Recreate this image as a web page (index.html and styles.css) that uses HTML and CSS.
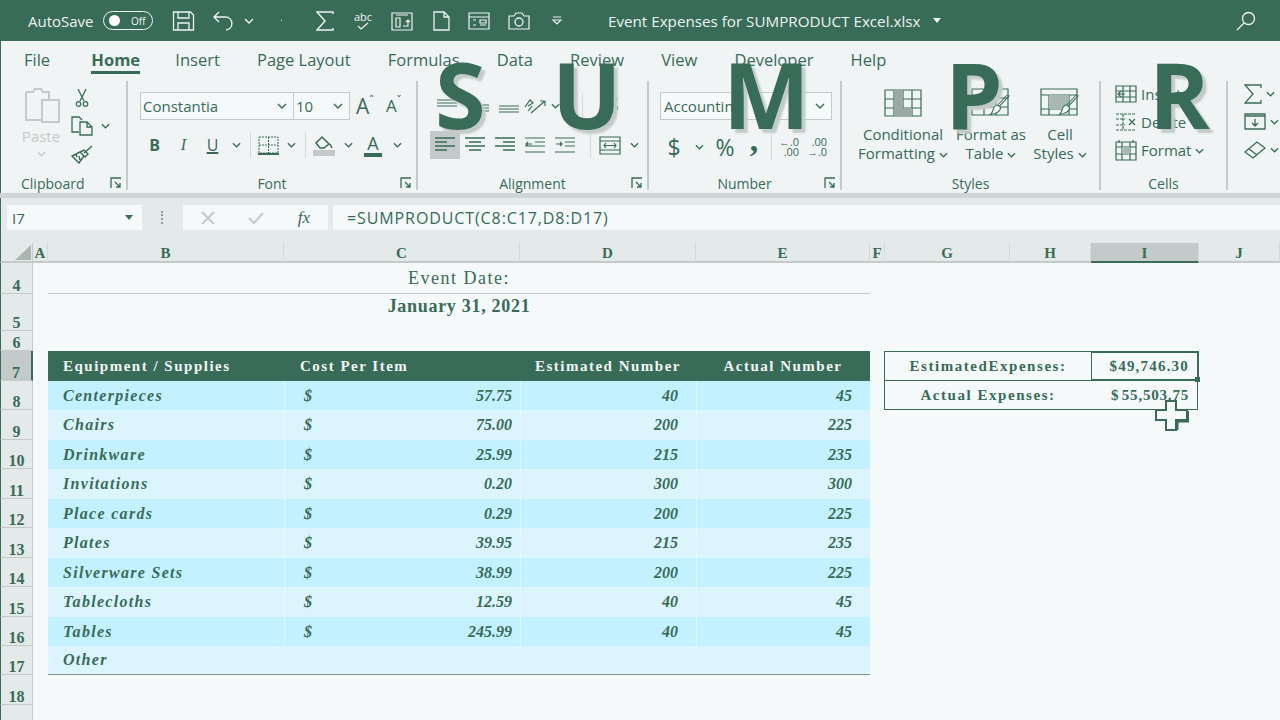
FILE: index.html
```html
<!DOCTYPE html>
<html lang="en">
<head>
    <meta charset="UTF-8">
    <title>Event Expenses for SUMPRODUCT Excel.xlsx</title>
    <link rel="stylesheet" href="styles.css">
</head>
<body>
<svg class="defs" width="0" height="0">
    <symbol id="chev" viewBox="0 0 10 6"><path d="M1 1l4 4 4-4" fill="none" stroke="currentColor" stroke-width="1.4"/></symbol>
    <symbol id="launch" viewBox="0 0 12 12"><path d="M1 11V1h10M5 5l5 5M10 6v4H6" fill="none" stroke="currentColor" stroke-width="1.3"/></symbol>
    <symbol id="brush" viewBox="0 0 30 30"><path d="M28 2L14 17M25 1L12 15M12 15l4 4c-1 5-6 8-14 9 4-3 3-7 5-10 1-2 3-3 5-3z" fill="#f5f9fa" stroke="currentColor" stroke-width="1.4"/></symbol>
</svg>
<div class="app">

    <!-- title bar -->
    <header class="titlebar">
        <span class="autosave">AutoSave</span>
        <span class="toggle"><i></i><b>Off</b></span>
        <svg width="23" height="20" viewBox="0 0 23 20"><path d="M1.500 1h17l3 3v15h-20zM6 1v6h11V1M6 19v-7h11v7" fill="none" stroke="currentColor" stroke-width="1.3"/></svg>
        <svg width="22" height="20" viewBox="0 0 22 20"><path d="M7 1L2 6l5 5M2 6h11c9 0 9 12 1 13" fill="none" stroke="currentColor" stroke-width="1.4"/></svg>
        <svg class="tiny" width="10" height="6"><use href="#chev"/></svg>
        <span class="dot"></span>
        <svg width="18" height="20" viewBox="0 0 18 20"><path d="M17 3V1H1l8 9-8 9h16v-2" fill="none" stroke="currentColor" stroke-width="1.4"/></svg>
        <span class="abc">abc<svg width="12" height="8" viewBox="0 0 12 8"><path d="M1 4l3 3 7-6" fill="none" stroke="currentColor" stroke-width="1.2"/></svg></span>
        <svg width="22" height="20" viewBox="0 0 22 20"><path d="M1 2h20v17H1zM5 7h4v9H5zM12 15h5V9M15 11l2-2 2 2M5 4h12" fill="none" stroke="currentColor" stroke-width="1.2"/></svg>
        <svg width="17" height="20" viewBox="0 0 17 20"><path d="M1 1h10l5 5v13H1zM11 1v5h5" fill="none" stroke="currentColor" stroke-width="1.3"/></svg>
        <svg width="22" height="18" viewBox="0 0 22 18"><path d="M1 1h20v16H1zM1 5h20M5 8h3M5 13h3M12 8h6v3h-6zM12 13h6" fill="none" stroke="currentColor" stroke-width="1.2"/></svg>
        <svg width="22" height="18" viewBox="0 0 22 18"><path d="M1 4h5l2-3h6l2 3h5v13H1z" fill="none" stroke="currentColor" stroke-width="1.2"/><circle cx="11" cy="10" r="4" fill="none" stroke="currentColor" stroke-width="1.3"/></svg>
        <svg class="qat-more" width="10" height="9" viewBox="0 0 10 9"><path d="M1 1h8M1 4l4 4 4-4z" fill="none" stroke="currentColor" stroke-width="1.2"/></svg>
        <span class="doc-title">Event Expenses for SUMPRODUCT Excel.xlsx</span>
        <span class="caret"></span>
        <svg class="search" width="20" height="20" viewBox="0 0 20 20"><circle cx="12.500" cy="7.500" r="6" fill="none" stroke="currentColor" stroke-width="1.3"/><path d="M8 12l-7 7" stroke="currentColor" stroke-width="1.3"/></svg>
    </header>

    <!-- ribbon -->
    <nav class="tabs">
        <span>File</span>
        <span class="active">Home</span>
        <span>Insert</span>
        <span>Page Layout</span>
        <span>Formulas</span>
        <span>Data</span>
        <span>Review</span>
        <span>View</span>
        <span>Developer</span>
        <span>Help</span>
    </nav>

    <section class="ribbon">
        <div class="group clipboard">
            <div class="group-body">
                <div class="paste">
                    <svg width="38" height="37" viewBox="0 0 38 37"><path d="M4 5h7l2-3h6l2 3h6v8M4 5v28h16M20 13h17v22H20z" fill="none" stroke="#c4cac9" stroke-width="2"/></svg>
                    <span>Paste</span>
                    <svg width="9" height="6"><use href="#chev"/></svg>
                </div>
                <div class="clip-tools">
                    <svg width="14" height="19" viewBox="0 0 14 19"><path d="M3 1l6 12M11 1L5 13" fill="none" stroke="currentColor" stroke-width="1.3"/><circle cx="3.500" cy="16" r="2.300" fill="none" stroke="currentColor" stroke-width="1.2"/><circle cx="10.500" cy="16" r="2.300" fill="none" stroke="currentColor" stroke-width="1.2"/></svg>
                    <span class="copy-row">
                        <svg width="23" height="20" viewBox="0 0 23 20"><path d="M8 16H1V1h7l3 3M9 6h7l5 5v8H9zM16 6v5h5" fill="none" stroke="currentColor" stroke-width="1.3"/></svg>
                        <svg class="tiny" width="9" height="6"><use href="#chev"/></svg>
                    </span>
                    <svg width="22" height="19" viewBox="0 0 22 19"><path d="M21 1l-8 7M13 5l4 4-3 3-5-5zM9 7l-8 4 7 7 5-7M5 9l1 3M8 11l1 4" fill="none" stroke="currentColor" stroke-width="1.4"/></svg>
                </div>
            </div>
            <div class="group-label"><span>Clipboard</span><svg width="12" height="12"><use href="#launch"/></svg></div>
        </div>

        <div class="group font">
            <div class="group-body stack">
                <div class="font-top">
                    <span class="combo font-name">Constantia<svg width="10" height="6"><use href="#chev"/></svg></span>
                    <span class="combo font-size">10<svg width="10" height="6"><use href="#chev"/></svg></span>
                    <span class="grow">A<sup>ˆ</sup></span>
                    <span class="shrink">A<sup>ˇ</sup></span>
                </div>
                <div class="font-tools tools">
                    <b class="glyph">B</b>
                    <i class="glyph ital">I</i>
                    <u class="glyph">U</u>
                    <svg width="9" height="6"><use href="#chev"/></svg>
                    <span class="vsep"></span>
                    <svg width="21" height="19" viewBox="0 0 21 19"><path d="M1 1h19v16H1zM10.500 1v16M1 9h19" fill="none" stroke="currentColor" stroke-width="1" stroke-dasharray="2 1"/><path d="M0 18h21" stroke="currentColor" stroke-width="2"/></svg>
                    <svg width="9" height="6"><use href="#chev"/></svg>
                    <span class="vsep"></span>
                    <svg width="22" height="21" viewBox="0 0 22 21"><path d="M3 8l6-6 7 7-5 4H7zM17 9l2 4" fill="none" stroke="currentColor" stroke-width="1.5"/><path d="M0 15h22v6H0z" fill="#c4cac9"/></svg>
                    <svg width="9" height="6"><use href="#chev"/></svg>
                    <span class="font-color">A</span>
                    <svg width="9" height="6"><use href="#chev"/></svg>
                </div>
            </div>
            <div class="group-label centered"><span>Font</span><svg width="12" height="12"><use href="#launch"/></svg></div>
        </div>

        <div class="group alignment">
            <div class="group-body stack">
                <div class="align-top tools">
                    <svg width="20" height="14" viewBox="0 0 20 14"><path d="M0 1h20M0 4h20M0 7h20" stroke="currentColor"/></svg>
                    <svg width="20" height="14" viewBox="0 0 20 14"><path d="M0 6h20M0 9h20M0 12h20" stroke="currentColor"/></svg>
                    <svg width="20" height="14" viewBox="0 0 20 14"><path d="M0 7h20M0 10h20M0 13h20" stroke="currentColor"/></svg>
                    <svg width="22" height="18" viewBox="0 0 22 18"><path d="M7 16L21 4M21 4h-5M21 4v5M1 10l5-7 3 3-5 3M4 14l4-5" fill="none" stroke="currentColor" stroke-width="1.2"/></svg>
                    <svg width="9" height="6"><use href="#chev"/></svg>
                    <span class="vsep"></span>
                    <svg width="20" height="18" viewBox="0 0 20 18"><path d="M1 2h18M1 8h14c5 0 5 6 0 6h-3M1 14h6" fill="none" stroke="currentColor"/></svg>
                </div>
                <div class="align-bottom tools">
                    <span class="pressed"><svg width="20" height="16" viewBox="0 0 20 16"><path d="M0 1h20M0 5h12M0 9h20M0 13h12" stroke="currentColor" stroke-width="1.3"/></svg></span>
                    <svg width="20" height="16" viewBox="0 0 20 16"><path d="M0 1h20M4 5h12M0 9h20M4 13h12" stroke="currentColor" stroke-width="1.3"/></svg>
                    <svg width="20" height="16" viewBox="0 0 20 16"><path d="M0 1h20M8 5h12M0 9h20M8 13h12" stroke="currentColor" stroke-width="1.3"/></svg>
                    <svg width="20" height="16" viewBox="0 0 20 16"><path d="M0 1h20M10 5h10M0 9h20M0 15h20M7 7H1M3 5L1 7l2 2" fill="none" stroke="currentColor" stroke-width="1.2"/></svg>
                    <svg width="20" height="16" viewBox="0 0 20 16"><path d="M0 1h20M10 5h10M10 9h10M0 15h20M1 7h6M5 5l2 2-2 2" fill="none" stroke="currentColor" stroke-width="1.2"/></svg>
                    <span class="vsep"></span>
                    <svg width="22" height="19" viewBox="0 0 22 19"><path d="M1 1h20v17H1zM1 5h20M1 14h20M5 9.500h12M7 7L5 9.500 7 12M15 7l2 2.500-2 2.500" fill="none" stroke="currentColor" stroke-width="1.2"/></svg>
                    <svg width="9" height="6"><use href="#chev"/></svg>
                </div>
            </div>
            <div class="group-label centered"><span>Alignment</span><svg width="12" height="12"><use href="#launch"/></svg></div>
        </div>

        <div class="group number">
            <div class="group-body stack">
                <span class="combo number-format">Accounting<svg width="10" height="6"><use href="#chev"/></svg></span>
                <div class="number-tools tools">
                    <span class="big">$</span>
                    <svg width="9" height="6"><use href="#chev"/></svg>
                    <span class="big">%</span>
                    <span class="comma">,</span>
                    <span class="vsep"></span>
                    <span class="decimals"><b>←.0</b><b>.00</b></span>
                    <span class="decimals"><b>.00</b><b>→.0</b></span>
                </div>
            </div>
            <div class="group-label centered"><span>Number</span><svg width="12" height="12"><use href="#launch"/></svg></div>
        </div>

        <div class="group styles">
            <div class="group-body styles-row">
                <div class="style-btn">
                    <svg width="38" height="30" viewBox="0 0 38 28"><path d="M1 1h36v26H1zM10 1v26M19 1v26M28 1v26M1 10h36M1 19h36" fill="none" stroke="currentColor" stroke-width="1.2"/><path d="M10 1h9v9h-9zM19 19h-9v-9h9zM10 19h18v8H10z" fill="#9aa9a4"/></svg>
                    <span>Conditional</span>
                    <span>Formatting <svg width="9" height="6"><use href="#chev"/></svg></span>
                </div>
                <div class="style-btn">
                    <svg width="40" height="30" viewBox="0 0 40 30"><path d="M1 1h36v26H1zM1 10h36M1 19h36M13 1v26M25 1v26" fill="none" stroke="currentColor" stroke-width="1.2"/><use href="#brush" x="18" y="6" width="22" height="22"/></svg>
                    <span>Format as</span>
                    <span>Table <svg width="9" height="6"><use href="#chev"/></svg></span>
                </div>
                <div class="style-btn">
                    <svg width="40" height="30" viewBox="0 0 40 30"><path d="M1 1h36v26H1zM1 7h36M1 21h36M9 7v20M29 7v20" fill="none" stroke="currentColor" stroke-width="1.2"/><path d="M9 7h20v14H9z" fill="#a9b8b3"/><use href="#brush" x="18" y="6" width="22" height="22"/></svg>
                    <span>Cell</span>
                    <span>Styles <svg width="9" height="6"><use href="#chev"/></svg></span>
                </div>
            </div>
            <div class="group-label centered"><span>Styles</span></div>
        </div>

        <div class="group cells">
            <div class="group-body cell-list">
                <div><svg width="22" height="18" viewBox="0 0 22 18"><path d="M1 1h20v16H1zM1 6h20M1 12h20M8 1v16M15 1v16" fill="none" stroke="currentColor" stroke-width="1.2"/><path d="M10 9H3M6 6L3 9l3 3" fill="none" stroke="currentColor" stroke-width="1.2"/></svg><span>Insert</span></div>
                <div><svg width="22" height="18" viewBox="0 0 22 18"><path d="M1 1h20M1 17h20M1 6h9M1 12h9M8 1v16" fill="none" stroke="currentColor" stroke-width="1.2" stroke-dasharray="3 1"/><path d="M14 6l6 6M20 6l-6 6" stroke="currentColor" stroke-width="1.2"/></svg><span>Delete</span></div>
                <div><svg width="22" height="22" viewBox="0 0 22 22"><path d="M1 3h20v18H1zM1 8h20M1 15h20M7 3v18M15 3v18M4 1v3M18 1v3" fill="none" stroke="currentColor" stroke-width="1.2"/><path d="M7 8h8v7H7z" fill="#a9b8b3"/></svg><span>Format <svg width="9" height="6"><use href="#chev"/></svg></span></div>
            </div>
            <div class="group-label centered"><span>Cells</span></div>
        </div>

        <div class="group editing">
            <div class="group-body cell-list">
                <div><svg width="18" height="20" viewBox="0 0 18 20"><path d="M17 4V1H1l8 9-8 9h16v-3" fill="none" stroke="currentColor" stroke-width="1.3"/></svg><svg class="tiny" width="9" height="6"><use href="#chev"/></svg></div>
                <div><svg width="22" height="17" viewBox="0 0 22 17"><path d="M1 1h20v15H1zM1 3h20M11 6v7M8 10l3 3 3-3" fill="none" stroke="currentColor" stroke-width="1.3"/></svg><svg class="tiny" width="9" height="6"><use href="#chev"/></svg></div>
                <div><svg width="22" height="18" viewBox="0 0 22 18"><path d="M1 11L13 1l8 6-12 10zM5 8l8 6" fill="none" stroke="currentColor" stroke-width="1.3"/></svg><svg class="tiny" width="9" height="6"><use href="#chev"/></svg></div>
            </div>
        </div>
    </section>

    <!-- formula bar -->
    <section class="formula-bar">
        <div class="name-box">I7<span class="caret dark"></span></div>
        <span class="grip"></span>
        <div class="fx-box">
            <svg width="14" height="14" viewBox="0 0 14 14"><path d="M1 1l12 12M13 1L1 13" stroke="#c4cac9" stroke-width="2"/></svg>
            <svg width="16" height="12" viewBox="0 0 16 12"><path d="M1 6l5 5 9-10" fill="none" stroke="#c4cac9" stroke-width="2"/></svg>
            <em>fx</em>
        </div>
        <div class="formula">=SUMPRODUCT(C8:C17,D8:D17)</div>
    </section>

    <!-- worksheet -->
    <main class="sheet">
        <div class="corner"></div>
        <div class="colhead">A</div>
        <div class="colhead">B</div>
        <div class="colhead">C</div>
        <div class="colhead">D</div>
        <div class="colhead">E</div>
        <div class="colhead">F</div>
        <div class="colhead">G</div>
        <div class="colhead">H</div>
        <div class="colhead current">I</div>
        <div class="colhead">J</div>

        <div class="rowhead">4</div>
        <div class="merged event-label">Event Date:</div>
        <div class="rowhead">5</div>
        <div class="merged event-date">January 31, 2021</div>
        <div class="rowhead">6</div>

        <div class="rowhead current">7</div>
        <div class="thead first">Equipment / Supplies</div>
        <div class="thead cost">Cost Per Item</div>
        <div class="thead">Estimated Number</div>
        <div class="thead">Actual Number</div>
        <div class="sum-label sum-top">EstimatedExpenses:</div>
        <div class="sum-value selected">$49,746.30<span class="handle"></span></div>

        <div class="rowhead">8</div>
        <div class="cell item">Centerpieces</div>
        <div class="cell money"><span>$</span><span>57.75</span></div>
        <div class="cell num">40</div>
        <div class="cell num">45</div>
        <div class="sum-label">Actual Expenses:</div>
        <div class="sum-value plain"><span>$</span><span>55,503.75</span></div>

        <div class="rowhead">9</div>
        <div class="cell item alt">Chairs</div>
        <div class="cell money alt"><span>$</span><span>75.00</span></div>
        <div class="cell num alt">200</div>
        <div class="cell num alt">225</div>

        <div class="rowhead">10</div>
        <div class="cell item">Drinkware</div>
        <div class="cell money"><span>$</span><span>25.99</span></div>
        <div class="cell num">215</div>
        <div class="cell num">235</div>

        <div class="rowhead">11</div>
        <div class="cell item alt">Invitations</div>
        <div class="cell money alt"><span>$</span><span>0.20</span></div>
        <div class="cell num alt">300</div>
        <div class="cell num alt">300</div>

        <div class="rowhead">12</div>
        <div class="cell item">Place cards</div>
        <div class="cell money"><span>$</span><span>0.29</span></div>
        <div class="cell num">200</div>
        <div class="cell num">225</div>

        <div class="rowhead">13</div>
        <div class="cell item alt">Plates</div>
        <div class="cell money alt"><span>$</span><span>39.95</span></div>
        <div class="cell num alt">215</div>
        <div class="cell num alt">235</div>

        <div class="rowhead">14</div>
        <div class="cell item">Silverware Sets</div>
        <div class="cell money"><span>$</span><span>38.99</span></div>
        <div class="cell num">200</div>
        <div class="cell num">225</div>

        <div class="rowhead">15</div>
        <div class="cell item alt">Tablecloths</div>
        <div class="cell money alt"><span>$</span><span>12.59</span></div>
        <div class="cell num alt">40</div>
        <div class="cell num alt">45</div>

        <div class="rowhead">16</div>
        <div class="cell item">Tables</div>
        <div class="cell money"><span>$</span><span>245.99</span></div>
        <div class="cell num">40</div>
        <div class="cell num">45</div>

        <div class="rowhead">17</div>
        <div class="cell item alt end">Other</div>
        <div class="cell alt end"></div>
        <div class="cell alt end"></div>
        <div class="cell alt end"></div>

        <div class="rowhead">18</div>
        <div class="rowhead">19</div>
    </main>

    <!-- big letters flying over the ribbon -->
    <div class="splash">
        <span class="s">S</span>
        <span class="u">U</span>
        <span class="m">M</span>
        <span class="p">P</span>
        <span class="r">R</span>
    </div>

    <svg class="cursor" width="34" height="31" viewBox="0 0 34 31"><path d="M11 1h10v9h11v10H21v10H11V20H1V10h10z" fill="#f5f9fa" stroke="#386b58" stroke-width="2"/><path d="M33 11v10H22v9" fill="none" stroke="#386b58" stroke-width="3"/></svg>
</div>
</body>
</html>
```

FILE: styles.css
```css
* {
    box-sizing: border-box;
}

body {
    margin: 0;
    font-family: "Open Sans", "Noto Sans", sans-serif;
    color: #386b58;
    background-color: #f5f9fa;
}

.defs {
    position: absolute;
}

.app {
    position: relative;
    width: 1280px;
    height: 720px;
    overflow: hidden;
}

svg {
    display: block;
}

/* title bar */
.titlebar {
    height: 41px;
    background-color: #386b58;
    color: #eef4f1;
    display: grid;
    grid-template-columns: 75px 69px 40px 32px 37px 35px 38px 37px 42px 35px 40px 44px 56px 325px 303px 1fr;
    align-items: center;
    justify-items: start;
    padding-left: 28px;
}

.autosave {
    font-size: 15px;
}

.toggle {
    width: 50px;
    height: 19px;
    border: 1px solid #eef4f1;
    border-radius: 10px;
    display: flex;
    align-items: center;
    gap: 11px;
    padding-left: 5px;
}

.toggle i {
    width: 11px;
    height: 11px;
    border-radius: 50%;
    background-color: #fff;
}

.toggle b {
    font-weight: 400;
    font-size: 10px;
}

.tiny {
    align-self: center;
}

.dot {
    width: 1px;
    height: 1px;
    background-color: #eef4f1;
}

.abc {
    font-size: 11px;
    line-height: 11px;
    display: flex;
    flex-direction: column;
    align-items: center;
}

.doc-title {
    font-size: 15.200px;
    white-space: nowrap;
}

.caret {
    width: 0;
    height: 0;
    border: 4px solid transparent;
    border-top: 5px solid #eef4f1;
    border-bottom: 0;
}

.caret.dark {
    border-top-color: #386b58;
}

/* ribbon */
.tabs {
    height: 37px;
    display: flex;
    gap: 37.200px;
    padding: 7px 0 0 24px;
    font-size: 16.500px;
    background-color: #f0f4f5;
    box-shadow: inset 1px 0 #386b58;
}

.tabs span {
    height: 26px;
    white-space: nowrap;
}

.tabs .active {
    font-weight: 700;
    margin: 0 -2px 0 4px;
    border-bottom: 3px solid #386b58;
}

.ribbon {
    height: 115px;
    display: flex;
    background-color: #f0f4f5;
    box-shadow: inset 1px 0 #386b58;
}

.group {
    display: flex;
    flex-direction: column;
    height: 109px;
    margin-top: 3px;
    border-right: 2px solid #c4cac9;
    font-size: 15px;
}

.group-body {
    flex: 1;
    min-height: 0;
}

.group-label {
    height: 22px;
    margin-bottom: -4px;
    font-size: 14px;
    padding: 0 4px 0 21px;
    display: flex;
    align-items: center;
    justify-content: space-between;
    position: relative;
}

.group-label.centered {
    justify-content: center;
    padding: 0;
}

.group-label.centered svg {
    position: absolute;
    right: 4px;
    top: 5px;
}

.clipboard {
    width: 128px;
}

.clipboard .group-body {
    display: flex;
    padding: 6px 0 0 20px;
}

.paste {
    width: 42px;
    color: #c4cac9;
    display: flex;
    flex-direction: column;
    align-items: center;
    font-size: 15px;
    margin-right: 9px;
}

.paste span {
    margin: 2px 0 5px;
}

.clip-tools {
    display: flex;
    flex-direction: column;
    align-items: flex-start;
    gap: 9px;
    padding-top: 1px;
}

.clip-tools > svg:first-child {
    margin-left: 4px;
}

.copy-row {
    display: flex;
    gap: 7px;
    align-items: center;
}

.stack {
    display: flex;
    flex-direction: column;
    padding-top: 11px;
    gap: 11px;
}

.font {
    width: 290px;
    padding-left: 12px;
}

.font .group-label {
    margin-left: -12px;
}

.font-top {
    display: flex;
    align-items: center;
    height: 28px;
}

.combo {
    height: 28px;
    border: 1px solid #c4cac9;
    background-color: #f5f9fa;
    display: flex;
    align-items: center;
    justify-content: space-between;
    padding: 0 6px 0 2px;
    font-size: 15px;
}

.font-name {
    width: 154px;
}

.font-size {
    width: 56px;
    border-left: 0;
}

.grow,
.shrink {
    font-size: 21px;
    display: flex;
    align-items: flex-start;
    line-height: 24px;
}

.grow {
    margin-left: 6px;
    width: 30px;
}

.shrink {
    font-size: 17px;
}

.grow sup,
.shrink sup {
    font-size: 11px;
    line-height: 11px;
}

.tools {
    display: grid;
    align-items: center;
    justify-items: center;
    height: 28px;
}

.font-tools {
    grid-template-columns: 29px 29px 29px 18px 10px 27px 18px 10px 28px 20px 30px 18px;
}

.glyph {
    font-size: 16px;
    font-family: "Liberation Serif", serif;
}

.font-tools b {
    font-family: "Open Sans", sans-serif;
}

.font-tools u {
    font-family: "Open Sans", sans-serif;
    text-decoration-thickness: 2px;
}

.vsep {
    width: 1px;
    height: 26px;
    background-color: #d3d9d8;
}

.font-color {
    font-size: 18px;
    line-height: 20px;
    padding: 0 3px;
    border-bottom: 4px solid #386b58;
}

.alignment {
    width: 231px;
}

.alignment .group-body {
    padding-left: 12px;
}

.align-top {
    grid-template-columns: 34px 30px 30px 21px 20px 34px 20px;
}

.align-bottom {
    grid-template-columns: 30px 30px 30px 30px 30px 20px 20px 28px;
}

.pressed {
    width: 30px;
    height: 28px;
    background-color: #c4cac9;
    display: flex;
    align-items: center;
    justify-content: center;
}

.number {
    width: 193px;
    padding-left: 11px;
}

.number .group-label {
    margin-left: -11px;
}

.number-format {
    width: 172px;
    padding-left: 3px;
}

.number-tools {
    grid-template-columns: 28px 22px 30px 28px 6px 30px 26px;
}

.big {
    font-size: 23px;
}

.comma {
    font-family: "Liberation Serif", serif;
    font-size: 34px;
    font-weight: 700;
    line-height: 16px;
    margin-top: -14px;
}

.decimals {
    font-size: 11px;
    line-height: 10px;
    display: flex;
    flex-direction: column;
    align-items: flex-end;
    white-space: nowrap;
}

.decimals b {
    font-weight: 400;
}

.styles {
    width: 259px;
}

.styles-row {
    display: grid;
    grid-template-columns: 104px 72px 66px;
    padding: 7px 0 0 9px;
}

.style-btn {
    display: flex;
    flex-direction: column;
    align-items: center;
    line-height: 19px;
    white-space: nowrap;
}

.style-btn > svg {
    margin-bottom: 7px;
}

.style-btn span svg {
    display: inline-block;
    vertical-align: middle;
}

.cells {
    width: 127px;
}

.cell-list {
    display: flex;
    flex-direction: column;
    gap: 5px;
    padding: 1px 0 0 14px;
}

.cell-list > div {
    display: flex;
    align-items: center;
    gap: 4px;
    height: 23px;
}

.cell-list span svg {
    display: inline-block;
    vertical-align: middle;
}

.editing {
    flex: 1;
    border-right: 0;
}

.editing .group-body {
    padding-left: 16px;
}

/* formula bar */
.formula-bar {
    height: 50px;
    display: flex;
    align-items: flex-start;
    padding: 7px 0 0 7px;
    border-top: 5px solid #d0d6d5;
    background-color: #e4e9e9;
    box-shadow: inset 1px 0 #386b58;
}

.name-box,
.fx-box,
.formula {
    height: 25px;
    background-color: #f5f9fa;
    display: flex;
    align-items: center;
    font-size: 15px;
}

.name-box {
    width: 135px;
    justify-content: space-between;
    padding: 0 9px 0 5px;
}

.grip {
    width: 2px;
    height: 13px;
    margin: 6px 20px 0 19px;
    border-left: 2px dotted #8aa097;
}

.fx-box {
    width: 145px;
    justify-content: space-between;
    padding: 0 18px;
}

.fx-box em {
    font-family: "Liberation Serif", serif;
    font-size: 17px;
}

.formula {
    flex: 1;
    margin-left: 5px;
    padding-left: 14px;
    font-size: 16px;
    letter-spacing: .9px;
}

/* worksheet */
.sheet {
    display: grid;
    grid-template-columns: 33px 15px 236px 236px 176px 174px 15px 125px 81px 108px 81px;
    grid-template-rows: 20px 31px 37px 20px 30px 29px 30px 29px 30px 29px 30px 29px 30px 29px 29px 30px 30px;
    font-family: "Liberation Serif", serif;
    background-color: #f5f9fa;
}

.corner,
.colhead,
.rowhead {
    background-color: #e4e9e9;
}

.corner {
    position: relative;
    grid-column: 1;
    border-left: 1px solid #386b58;
    border-bottom: 2px solid #c4cac9;
    border-right: 1px solid #c4cac9;
}

.corner::after {
    content: "";
    position: absolute;
    right: 1px;
    bottom: 1px;
    border-left: 16px solid transparent;
    border-bottom: 15px solid #a9b5b1;
}

.colhead {
    display: flex;
    align-items: center;
    justify-content: center;
    padding-top: 2px;
    font-weight: 700;
    font-size: 15px;
    border-bottom: 2px solid #c4cac9;
    border-right: 1px solid #d5dad9;
}

.colhead.current {
    background: #c4cac9;
    border-bottom-color: #386b58;
}

.rowhead {
    grid-column: 1;
    display: flex;
    align-items: flex-end;
    justify-content: center;
    font-weight: 700;
    font-size: 16px;
    line-height: 14px;
    border-left: 1px solid #386b58;
    border-right: 1px solid #c4cac9;
    border-bottom: 1px solid #c4cac9;
}

.rowhead.current {
    background: #c4cac9;
    border-right: 2px solid #386b58;
}

.merged {
    grid-column: 3 / 7;
    text-align: center;
    font-size: 18px;
}

.event-label {
    border-bottom: 1px solid #c4cac9;
    padding-top: 5px;
    letter-spacing: 1.500px;
}

.event-date {
    font-weight: 700;
    padding-top: 2px;
    letter-spacing: .7px;
}

.thead {
    background-color: #386b58;
    color: #f2f6f4;
    font-weight: 700;
    font-size: 15px;
    letter-spacing: 1.500px;
    display: flex;
    align-items: center;
    justify-content: center;
    white-space: nowrap;
}

.thead.first {
    grid-column: 3;
    justify-content: flex-start;
    padding-left: 15px;
}

.thead.cost {
    justify-content: flex-start;
    padding-left: 16px;
}

.cell {
    background-color: #c4f1ff;
    font-weight: 700;
    font-style: italic;
    font-size: 16px;
    display: flex;
    align-items: center;
    white-space: nowrap;
    border-left: 1px dotted #eefbff;
}

.cell.alt {
    background-color: #dcf5fc;
}

.cell.end {
    border-left: 0;
    border-bottom: 1px solid #7d958b;
}

.item {
    grid-column: 3;
    padding-left: 15px;
    letter-spacing: 1.300px;
    border-left: 0;
}

.money {
    justify-content: space-between;
    padding: 0 8px 0 19px;
}

.num {
    justify-content: flex-end;
    padding-right: 18px;
}

.sum-label {
    grid-column: 8 / 10;
    display: flex;
    align-items: center;
    justify-content: center;
    font-weight: 700;
    font-size: 15px;
    letter-spacing: 1.550px;
    border: 1px solid #386b58;
    border-top: 0;
    border-right: 0;
    margin-left: -1px;
}

.sum-label.sum-top {
    border-top: 1px solid #386b58;
}

.sum-value {
    display: flex;
    align-items: center;
    justify-content: flex-end;
    font-weight: 700;
    font-size: 15px;
    padding-right: 8px;
    letter-spacing: 1.200px;
}

.sum-value.plain {
    justify-content: space-between;
    padding-left: 20px;
    letter-spacing: .8px;
    border-right: 1px solid #386b58;
    border-bottom: 1px solid #386b58;
    margin-right: 1px;
}

.sum-value.selected {
    position: relative;
    border: 2px solid #386b58;
    border-left-width: 1px;
}

.handle {
    position: absolute;
    right: -3px;
    bottom: -3px;
    width: 5px;
    height: 5px;
    background-color: #386b58;
}

/* overlay letters */
.splash span {
    position: absolute;
    top: 31px;
    font-family: "Open Sans", sans-serif;
    font-weight: 700;
    font-size: 92px;
    line-height: 125px;
    color: #386b58;
    text-shadow: 4px 4px 2px #c4cac9;
}

.splash .s { left: 435px; }
.splash .u { left: 552px; }
.splash .m { left: 723px; }
.splash .p { left: 945px; }
.splash .r { left: 1149px; }

.cursor {
    position: absolute;
    left: 1155px;
    top: 400px;
}
```
